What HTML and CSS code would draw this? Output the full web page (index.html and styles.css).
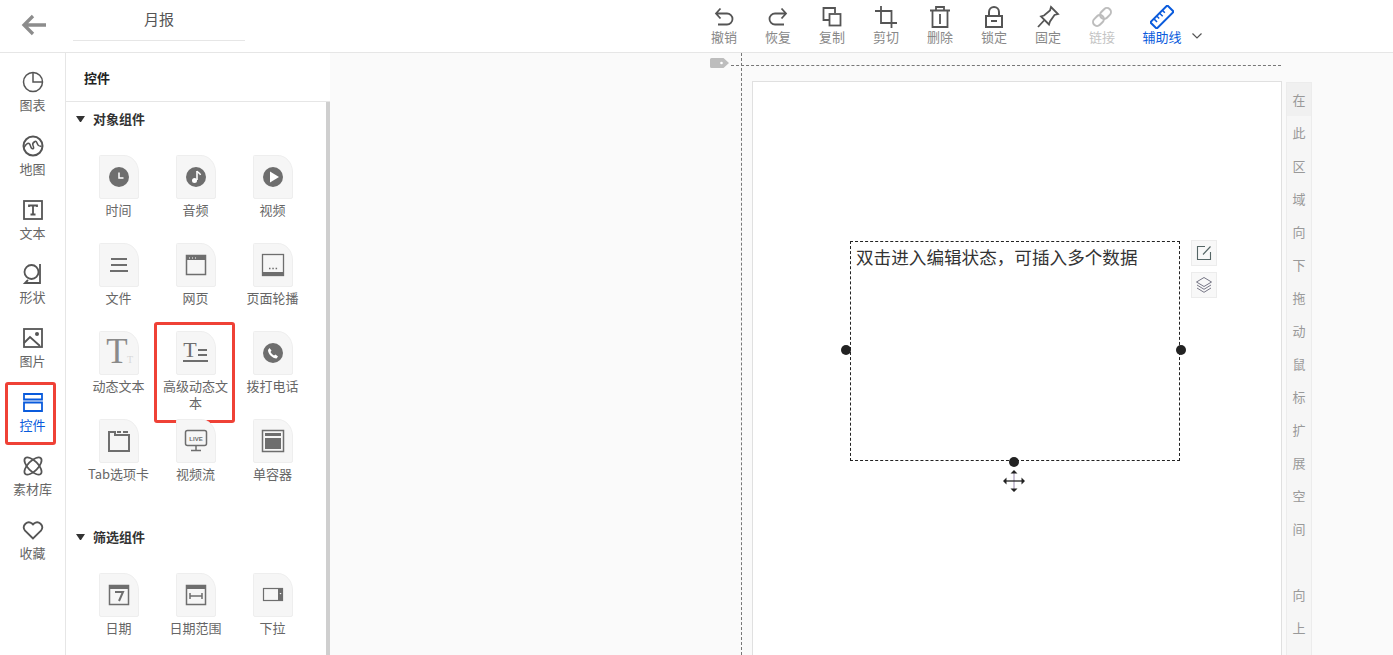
FILE: index.html
```html
<!DOCTYPE html>
<html lang="zh">
<head>
<meta charset="utf-8">
<title>月报</title>
<link rel="stylesheet" href="styles.css">
</head>
<body>
<svg class="defs" width="0" height="0" aria-hidden="true">
  <symbol id="card" viewBox="0 0 40 44"><path d="M1.500.5H25C33 .5 39.500 8 39.500 17V42a1.500 1.500 0 0 1-1.500 1.500H2A1.500 1.500 0 0 1 .5 42V1.500a1 1 0 0 1 1-1Z" fill="#f6f6f6" stroke="#eeeeee"/></symbol>
</svg>
<div class="app">
  <header class="topbar">
    <div class="top-left">
      <svg class="back" width="28" height="24" viewBox="0 0 28 24"><path d="M26 12H4M13 3l-9 9 9 9" fill="none" stroke="#8c8c8c" stroke-width="3.300"/></svg>
      <div class="title">月报</div>
    </div>
    <div class="tools">
      <div class="tool"><svg width="24" height="24" viewBox="0 0 24 24"><path d="M4.500 8.500H15a5 5 0 0 1 0 11H6M8.500 3.500l-4.500 5 4.500 5" fill="none" stroke="#555" stroke-width="1.800"/></svg><span>撤销</span></div>
      <div class="tool"><svg width="24" height="24" viewBox="0 0 24 24"><path d="M19.500 8.500H9a5 5 0 0 0 0 11h9M15.500 3.500l4.500 5-4.500 5" fill="none" stroke="#555" stroke-width="1.800"/></svg><span>恢复</span></div>
      <div class="tool"><svg width="24" height="24" viewBox="0 0 24 24"><path d="M9 15H3.500V3H15v5" fill="none" stroke="#555" stroke-width="1.800"/><rect x="9.500" y="9" width="11" height="11.500" fill="none" stroke="#555" stroke-width="1.800"/></svg><span>复制</span></div>
      <div class="tool"><svg width="24" height="24" viewBox="0 0 24 24"><path d="M7 1v17h16M1 6h16.500v17" fill="none" stroke="#555" stroke-width="1.800"/></svg><span>剪切</span></div>
      <div class="tool"><svg width="24" height="24" viewBox="0 0 24 24"><path d="M2 5.500h20M8 5V2h8v3M4.500 6v16h15V6M12 9v10" fill="none" stroke="#555" stroke-width="1.800"/></svg><span>删除</span></div>
      <div class="tool"><svg width="24" height="24" viewBox="0 0 24 24"><path d="M7 11V7a5 5 0 0 1 10 0v4" fill="none" stroke="#555" stroke-width="2"/><rect x="4" y="11" width="16" height="11" fill="none" stroke="#555" stroke-width="2"/><path d="M9 16h6" stroke="#555" stroke-width="2"/></svg><span>锁定</span></div>
      <div class="tool"><svg width="24" height="24" viewBox="0 0 24 24"><path d="M15 2l7 7-3.500 1-4.500 6.500-1 3-8-8 3-1L14 5.500ZM8 15.500L2 22" fill="none" stroke="#555" stroke-width="1.800"/></svg><span>固定</span></div>
      <div class="tool off"><svg width="24" height="24" viewBox="0 0 24 24"><g fill="none" stroke="#bdbdbd" stroke-width="2" transform="rotate(-45 12 12)"><rect x="1" y="8" width="12" height="8" rx="4"/><rect x="11" y="8" width="12" height="8" rx="4"/></g></svg><span>链接</span></div>
      <div class="tool guide"><svg width="24" height="24" viewBox="0 0 24 24"><g transform="rotate(-45 12 12)"><rect x="0" y="7.500" width="24" height="9" fill="none" stroke="#0a5bdc" stroke-width="2"/><path d="M5 8v4M9 8v3M13 8v4M17 8v3" stroke="#0a5bdc" stroke-width="1.500"/></g></svg><span>辅助线</span></div>
      <svg class="chev" width="12" height="8" viewBox="0 0 12 8"><path d="M1.500 1.500L6 6l4.500-4.500" fill="none" stroke="#555" stroke-width="1.200"/></svg>
    </div>
  </header>
  <div class="main">
    <nav class="nav">
      <div class="nav-item"><svg width="22" height="22" viewBox="0 0 22 22"><circle cx="11" cy="11" r="9.500" fill="none" stroke="#555" stroke-width="1.500"/><path d="M11 1.500V11h9.500" fill="none" stroke="#555" stroke-width="1.500"/></svg><span>图表</span></div>
      <div class="nav-item"><svg width="22" height="22" viewBox="0 0 22 22"><circle cx="11" cy="11" r="9.500" fill="none" stroke="#555" stroke-width="2"/><path d="M2 12.500c2-3 3-5 5-4s1 4 3 5 2-1 1-3 0-3 2-4 2 3 3.500 4 3 .5 3 .5" fill="none" stroke="#555" stroke-width="1.500"/></svg><span>地图</span></div>
      <div class="nav-item"><svg width="22" height="22" viewBox="0 0 22 22"><rect x="2" y="2" width="18" height="18" fill="none" stroke="#555" stroke-width="1.800"/><path d="M7 8V6.500h8V8M11 6.500V15.500M8.500 15.500h5" fill="none" stroke="#555" stroke-width="1.800"/></svg><span>文本</span></div>
      <div class="nav-item"><svg width="22" height="22" viewBox="0 0 22 22"><circle cx="9.500" cy="9" r="7" fill="none" stroke="#555" stroke-width="1.800"/><path d="M18 1v19H3l3-3" fill="none" stroke="#555" stroke-width="1.800"/></svg><span>形状</span></div>
      <div class="nav-item"><svg width="22" height="22" viewBox="0 0 22 22"><rect x="2" y="2" width="18" height="18" fill="none" stroke="#555" stroke-width="1.800"/><path d="M2 16l6-6 10 9" fill="none" stroke="#555" stroke-width="1.800"/><circle cx="15" cy="7" r="2" fill="#555"/></svg><span>图片</span></div>
      <div class="nav-item active"><svg width="22" height="22" viewBox="0 0 22 22"><path d="M2 3h18v5.500H2ZM2 11.500h18V20H2Z" fill="none" stroke="#0a5bdc" stroke-width="1.800"/></svg><span>控件</span></div>
      <div class="nav-item"><svg width="22" height="22" viewBox="0 0 22 22"><g fill="none" stroke="#555" stroke-width="1.800"><ellipse cx="11" cy="11" rx="5" ry="11" transform="rotate(45 11 11)"/><ellipse cx="11" cy="11" rx="5" ry="11" transform="rotate(-45 11 11)"/></g></svg><span>素材库</span></div>
      <div class="nav-item"><svg width="22" height="22" viewBox="0 0 22 22"><path d="M11 19.500L2.800 11.300A5 5 0 0 1 10 4.500l1 1 1-1a5 5 0 0 1 7.200 6.800Z" fill="none" stroke="#555" stroke-width="1.800"/></svg><span>收藏</span></div>
    </nav>
    <aside class="panel">
      <div class="panel-head">控件</div>
      <div class="panel-body">
        <div class="panel-scroll">
          <div class="sec-title first"><i class="tri"></i>对象组件</div>
          <div class="grid">
            <div class="widget"><div class="card"><svg class="bg"><use href="#card"/></svg><svg class="ic" width="24" height="24" viewBox="0 0 24 24"><circle cx="12" cy="12" r="10" fill="#6e6e6e"/><path d="M12 7.500V13h4.500" fill="none" stroke="#fff" stroke-width="1.500"/></svg></div><span>时间</span></div>
            <div class="widget"><div class="card"><svg class="bg"><use href="#card"/></svg><svg class="ic" width="24" height="24" viewBox="0 0 24 24"><circle cx="12" cy="12" r="10" fill="#6e6e6e"/><path d="M13 6v9" stroke="#fff" stroke-width="1.600"/><path d="M13 6c1 2 3 2 3.500 4" fill="none" stroke="#fff" stroke-width="1.500"/><circle cx="10.500" cy="15.500" r="2.500" fill="#fff"/></svg></div><span>音频</span></div>
            <div class="widget"><div class="card"><svg class="bg"><use href="#card"/></svg><svg class="ic" width="24" height="24" viewBox="0 0 24 24"><circle cx="12" cy="12" r="10" fill="#6e6e6e"/><path d="M9 6.500v11l9-5.500Z" fill="#fff"/></svg></div><span>视频</span></div>
            <div class="widget"><div class="card"><svg class="bg"><use href="#card"/></svg><svg class="ic" width="24" height="24" viewBox="0 0 24 24"><path d="M4 6h16M4 12h16M3 18h18" stroke="#6e6e6e" stroke-width="2"/></svg></div><span>文件</span></div>
            <div class="widget"><div class="card"><svg class="bg"><use href="#card"/></svg><svg class="ic" width="24" height="24" viewBox="0 0 24 24"><rect x="2.500" y="2.500" width="19" height="19" fill="none" stroke="#6e6e6e" stroke-width="1.500"/><path d="M2.500 2.500h19V7h-19Z" fill="#6e6e6e"/><path d="M5 5h1M8 5h1M11 5h1" stroke="#fff"/></svg></div><span>网页</span></div>
            <div class="widget"><div class="card"><svg class="bg"><use href="#card"/></svg><svg class="ic" width="24" height="24" viewBox="0 0 24 24"><rect x="1.500" y="1.500" width="21" height="21" fill="none" stroke="#6e6e6e" stroke-width="1.300"/><path d="M1.500 19h21v3.500h-21Z" fill="#6e6e6e"/><path d="M8 15.500h1.500M11.300 15.500h1.500M14.600 15.500h1.500" stroke="#6e6e6e" stroke-width="1.500"/></svg></div><span>页面轮播</span></div>
            <div class="widget"><div class="card"><svg class="bg"><use href="#card"/></svg><svg class="ic ic-t" width="32" height="32" viewBox="0 0 32 32"><text class="t-big" x="14" y="26" text-anchor="middle">T</text><text class="t-small" x="27" y="26" text-anchor="middle">T</text></svg></div><span>动态文本</span></div>
            <div class="widget"><div class="card"><svg class="bg"><use href="#card"/></svg><svg class="ic ic-t" width="26" height="26" viewBox="0 0 26 26"><text class="t-mid" x="7" y="17" text-anchor="middle">T</text><path d="M15 10h9M15 15h9" stroke="#6e6e6e" stroke-width="2"/><path d="M0 21h25" stroke="#6e6e6e" stroke-width="2"/></svg></div><span>高级动态文本</span></div>
            <div class="widget"><div class="card"><svg class="bg"><use href="#card"/></svg><svg class="ic" width="24" height="24" viewBox="0 0 24 24"><circle cx="12" cy="12" r="10" fill="#6e6e6e"/><path d="M8.500 7l2 2.500-1 1.500c.8 1.500 2 2.700 3.500 3.500l1.500-1 2.500 2-1.500 2c-4 0-8.500-4.500-8.500-8.500Z" fill="#fff"/></svg></div><span>拨打电话</span></div>
            <div class="widget"><div class="card"><svg class="bg"><use href="#card"/></svg><svg class="ic" width="24" height="24" viewBox="0 0 24 24"><path d="M2 3v19h20V6H8V3Z" fill="none" stroke="#6e6e6e" stroke-width="2"/><path d="M10 3h4M16 3h5" stroke="#6e6e6e" stroke-width="2"/></svg></div><span>Tab选项卡</span></div>
            <div class="widget"><div class="card"><svg class="bg"><use href="#card"/></svg><svg class="ic ic-t" width="24" height="24" viewBox="0 0 24 24"><rect x="1.500" y="1.500" width="21" height="15" rx="2" fill="none" stroke="#6e6e6e" stroke-width="1.500"/><text class="live" x="12" y="11.500" text-anchor="middle">LIVE</text><path d="M12 17v4M7 21.500h10" stroke="#6e6e6e" stroke-width="1.500"/></svg></div><span>视频流</span></div>
            <div class="widget"><div class="card"><svg class="bg"><use href="#card"/></svg><svg class="ic" width="24" height="24" viewBox="0 0 24 24"><rect x="1.500" y="1.500" width="21" height="21" fill="none" stroke="#6e6e6e" stroke-width="1.500"/><path d="M4 4h16v3H4ZM4 9h16v11H4Z" fill="#6e6e6e"/></svg></div><span>单容器</span></div>
          </div>
          <div class="sec-title"><i class="tri"></i>筛选组件</div>
          <div class="grid">
            <div class="widget"><div class="card"><svg class="bg"><use href="#card"/></svg><svg class="ic" width="24" height="24" viewBox="0 0 24 24"><rect x="2.500" y="2.500" width="19" height="19" fill="none" stroke="#6e6e6e" stroke-width="1.500"/><path d="M2.500 2.500h19V6h-19Z" fill="#6e6e6e"/><path d="M8 9h8l-4 9" fill="none" stroke="#6e6e6e" stroke-width="2"/></svg></div><span>日期</span></div>
            <div class="widget"><div class="card"><svg class="bg"><use href="#card"/></svg><svg class="ic" width="24" height="24" viewBox="0 0 24 24"><rect x="2.500" y="2.500" width="19" height="19" fill="none" stroke="#6e6e6e" stroke-width="1.500"/><path d="M2.500 2.500h19V6h-19Z" fill="#6e6e6e"/><path d="M6 10v6M18 10v6M6 13h12" fill="none" stroke="#6e6e6e" stroke-width="1.500"/></svg></div><span>日期范围</span></div>
            <div class="widget"><div class="card"><svg class="bg"><use href="#card"/></svg><svg class="ic" width="24" height="24" viewBox="0 0 24 24"><rect x="2.500" y="5.500" width="19" height="12" fill="none" stroke="#6e6e6e" stroke-width="1.200"/><path d="M17 5h5v13h-5Z" fill="#6e6e6e"/><path d="M18.500 10h2l-1 1.500Z" fill="#fff"/></svg></div><span>下拉</span></div>
          </div>
        </div>
      </div>
    </aside>
    <main class="canvas">
      <div class="guide-v"></div>
      <div class="guide-h"></div>
      <svg class="tag" width="19" height="10" viewBox="0 0 19 10"><path d="M1.500 0H13.500L19 5l-5.500 5H1.500A1.500 1.500 0 0 1 0 8.500V1.500A1.500 1.500 0 0 1 1.500 0Z" fill="#bdbdbd"/><circle cx="11.500" cy="5" r="1.300" fill="#fff"/></svg>
      <section class="page">
        <div class="textbox">
          <p class="textbox-text">双击进入编辑状态，可插入多个数据</p>
          <i class="dot dot-l"></i><i class="dot dot-r"></i><i class="dot dot-b"></i>
          <svg class="move" width="24" height="24" viewBox="0 0 24 24"><path d="M12 4v16" stroke="#9a8ab0" stroke-width="1"/><path d="M3 12h18" stroke="#222" stroke-width="1.300"/><path d="M12 1l3.500 3.500h-7ZM12 23l3.500-3.500h-7ZM1 12l3.500-3.500v7ZM23 12l-3.500-3.500v7Z" fill="#222"/></svg>
          <div class="side-btns">
            <div class="side-btn"><svg width="16" height="16" viewBox="0 0 16 16"><path d="M9 1.500H1.500V14.500H14.500V7M7 9.500L14.500 1.500" fill="none" stroke="#566" stroke-width="1.100"/></svg></div>
            <div class="side-btn"><svg width="18" height="18" viewBox="0 0 18 18"><path d="M9 1.500L16.500 6 9 10.500 1.500 6Z M2 9l7 4.300L16 9 M2 12l7 4.300L16 12" fill="none" stroke="#667" stroke-width=".9"/></svg></div>
          </div>
        </div>
      </section>
      <aside class="strip">
        <span class="hover">在</span><span>此</span><span>区</span><span>域</span><span>向</span><span>下</span><span>拖</span><span>动</span><span>鼠</span><span>标</span><span>扩</span><span>展</span><span>空</span><span>间</span><span class="gap"></span><span>向</span><span>上</span>
      </aside>
    </main>
  </div>
</div>
</body>
</html>
```
FILE: styles.css
```css
*, *::before, *::after { box-sizing: border-box; margin: 0; padding: 0; }
html, body { width: 100%; height: 100%; overflow: hidden; }
body {
  font-family: "Noto Sans CJK SC", "Liberation Sans", sans-serif;
  font-size: 13px;
  color: #666;
  background: #fff;
}
.defs { display: block; height: 0; }
.app { width: 1393px; height: 655px; display: flex; flex-direction: column; overflow: hidden; }

.topbar {
  height: 53px;
  flex: none;
  display: flex;
  border-bottom: 1px solid #e6e6e6;
  background: #fff;
}
.top-left { width: 700px; flex: none; display: flex; align-items: flex-start; padding-left: 20px; }
.back { margin-top: 13px; }
.title {
  width: 172px;
  height: 41px;
  margin-left: 25px;
  border-bottom: 1px solid #e6e6e6;
  text-align: center;
  font-size: 15px;
  line-height: 38px;
  color: #555;
}
.tools { display: flex; align-items: flex-start; }
.tool {
  width: 54px;
  display: flex;
  flex-direction: column;
  align-items: center;
  padding-top: 5px;
  color: #888;
  line-height: 16px;
}
.tool:first-child { margin-left: -3px; }
.tool svg { display: block; margin-bottom: -1px; }
.tool span { display: block; margin-top: 1px; }
.tool.off { color: #c4c4c4; }
.tool.guide { width: 66px; color: #0a5bdc; }
.chev { margin: 32px 0 0 -4px; }

.main { flex: 1; display: flex; min-height: 0; }
.nav {
  width: 66px;
  flex: none;
  border-right: 1px solid #e6e6e6;
  padding-top: 17px;
  display: flex;
  flex-direction: column;
  background: #fff;
}
.nav-item {
  height: 64px;
  display: flex;
  flex-direction: column;
  align-items: center;
  line-height: 16px;
}
.nav-item svg { display: block; height: 24px; margin-bottom: 3px; }
.nav-item.active { color: #0a5bdc; position: relative; }
.nav-item.active::after {
  content: "";
  position: absolute;
  left: 5px;
  top: -8px;
  width: 51px;
  height: 63px;
  border: 3px solid #ef4136;
  border-radius: 3px;
}

.panel { width: 264px; flex: none; display: flex; flex-direction: column; background: #fff; }
.panel-head {
  height: 49px;
  flex: none;
  padding-left: 18px;
  border-bottom: 1px solid #e6e6e6;
  font-weight: 700;
  line-height: 49px;
  color: #222;
}
.panel-body { flex: 1; min-height: 0; border-right: 4px solid #cfcfcf; overflow: hidden; }
.panel-scroll { height: 100%; overflow: hidden; }
.sec-title {
  height: 18px;
  margin-top: 21px;
  padding-left: 10px;
  font-weight: 700;
  line-height: 18px;
  color: #333;
  display: flex;
  align-items: center;
}
.sec-title.first { margin-top: 8px; }
.tri {
  width: 9px;
  height: 6px;
  margin-right: 8px;
  border-left: 4.500px solid transparent;
  border-right: 4.500px solid transparent;
  border-top: 6px solid #333;
  flex: none;
}
.grid {
  display: grid;
  grid-template-columns: repeat(3, 77px);
  grid-auto-rows: 88px;
  margin-top: 27px;
  padding-left: 14px;
}
.widget {
  display: flex;
  flex-direction: column;
  align-items: center;
  text-align: center;
  line-height: 17px;
  position: relative;
}
.widget:nth-child(8)::after {
  content: "";
  position: absolute;
  left: -3px;
  top: -9px;
  width: 81px;
  height: 101px;
  border: 3px solid #ef4136;
  border-radius: 3px;
  pointer-events: none;
}
.widget span { display: block; width: 72px; margin-top: 2px; }
.card { width: 40px; height: 44px; position: relative; flex: none; display: flex; align-items: center; justify-content: center; }
.bg { position: absolute; left: 0; top: 0; width: 40px; height: 44px; }
.ic { position: relative; flex: none; }
.ic-t { overflow: visible; }
.live { font: 700 6px "Liberation Sans", sans-serif; fill: #6e6e6e; }
.t-big { font: 400 35px "Liberation Serif", serif; fill: #8a8a8a; }
.t-small { font: 400 10px "Liberation Serif", serif; fill: #d8d8d8; }
.t-mid { font: 400 22px "Liberation Serif", serif; fill: #6e6e6e; }

.canvas {
  flex: 1;
  min-width: 0;
  position: relative;
  background: #fafafa;
  display: flex;
  align-items: flex-start;
  padding: 28px 0 0 422px;
  overflow: hidden;
}
.guide-v { position: absolute; left: 411px; top: 0; bottom: 0; border-left: 1px dashed #777; }
.guide-h { position: absolute; left: 401px; top: 12px; width: 550px; border-top: 1px dashed #777; }
.tag { position: absolute; left: 380px; top: 5px; }
.page {
  width: 530px;
  height: 640px;
  flex: none;
  background: #fff;
  border: 1px solid #e0e0e0;
  position: relative;
}
.textbox {
  position: absolute;
  left: 97px;
  top: 159px;
  width: 330px;
  height: 220px;
  border: 1px dashed #222;
}
.textbox-text { font-size: 17.600px; line-height: 24px; color: #333; padding: 3px 0 0 5px; white-space: nowrap; }
.dot { position: absolute; width: 10px; height: 10px; border-radius: 50%; background: #222; }
.dot-l { left: -10px; top: 103px; }
.dot-r { left: 325px; top: 103px; }
.dot-b { left: 158px; top: 215px; }
.move { position: absolute; left: 151px; top: 227px; }
.side-btns { position: absolute; left: 340px; top: -2px; display: flex; flex-direction: column; gap: 6px; }
.side-btn {
  width: 26px;
  height: 26px;
  background: #f8f8f8;
  border: 1px solid #ececec;
  display: flex;
  align-items: center;
  justify-content: center;
}
.strip {
  width: 26px;
  height: 640px;
  flex: none;
  margin-left: 4px;
  margin-top: 1px;
  background: #f6f6f6;
  border: 1px solid #ececec;
  display: flex;
  flex-direction: column;
  align-items: stretch;
  color: #999;
}
.strip span { height: 33px; flex: none; text-align: center; line-height: 33px; }
.strip .hover { background: #f0f0f0; }
```
